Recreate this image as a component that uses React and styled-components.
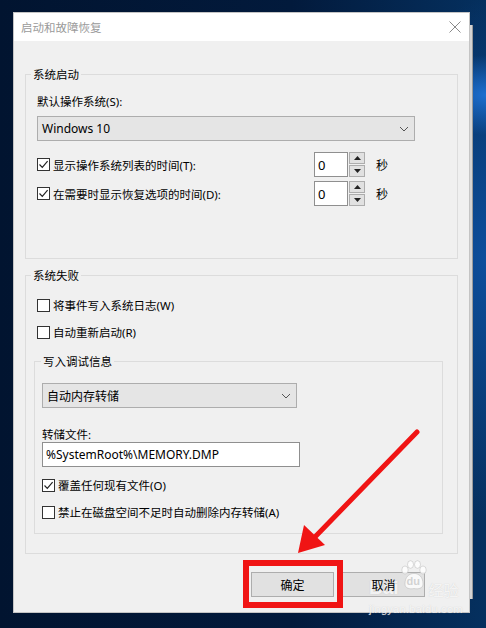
import React from 'react';
import styled, { createGlobalStyle } from 'styled-components';

const GlobalStyle = createGlobalStyle`
  html, body {
    margin: 0;
    padding: 0;
  }
  body {
    width: 486px;
    height: 628px;
    overflow: hidden;
    font-family: "Noto Sans", "Noto Sans CJK SC", sans-serif;
    font-size: 11.5px;
  }
`;

function Check({ checked }) {
  return (
    <CheckBox>
      {checked && (
        <svg width="11" height="11" viewBox="0 0 11 11">
          <path d="M1.5 5.5 L4.3 8.3 L9.6 2.2" fill="none" stroke="#222" strokeWidth="1.2" />
        </svg>
      )}
    </CheckBox>
  );
}

function CheckRow({ checked, label, indent }) {
  return (
    <CheckLine $indent={indent}>
      <Check checked={checked} />
      <span>{label}</span>
    </CheckLine>
  );
}

function Combo({ value, width }) {
  return (
    <ComboBox $width={width}>
      <span>{value}</span>
      <svg width="10" height="6" viewBox="0 0 10 6">
        <path d="M1 1 L5 5 L9 1" fill="none" stroke="#555" strokeWidth="1" />
      </svg>
    </ComboBox>
  );
}

function Spinner({ value }) {
  return (
    <SpinWrap>
      <SpinInput>{value}</SpinInput>
      <SpinButtons>
        <SpinBtn>
          <svg width="7" height="4" viewBox="0 0 7 4"><path d="M0 4 L3.5 0 L7 4 Z" fill="#222" /></svg>
        </SpinBtn>
        <SpinBtn>
          <svg width="7" height="4" viewBox="0 0 7 4"><path d="M0 0 L7 0 L3.5 4 Z" fill="#222" /></svg>
        </SpinBtn>
      </SpinButtons>
    </SpinWrap>
  );
}

function TimeRow({ label }) {
  return (
    <TimeLine>
      <TimeLabel>
        <Check checked />
        <span>{label}</span>
      </TimeLabel>
      <Spinner value="0" />
      <Unit>秒</Unit>
    </TimeLine>
  );
}

function Paw() {
  return (
    <svg width="28" height="30" viewBox="0 0 28 30">
      <g fill="rgba(255,255,255,0.8)" stroke="rgba(170,170,170,0.5)" strokeWidth="0.8">
        <ellipse cx="5" cy="10" rx="3.2" ry="4" />
        <ellipse cx="10.5" cy="4.5" rx="3" ry="3.8" />
        <ellipse cx="17.5" cy="4.5" rx="3" ry="3.8" />
        <ellipse cx="23" cy="10" rx="3.2" ry="4" />
        <path d="M5 24 C5 17 9 13.5 14 13.5 C19 13.5 23 17 23 24 C23 28 19 29.5 14 28.5 C9 29.5 5 28 5 24 Z" />
      </g>
    </svg>
  );
}

export default function App() {
  return (
    <>
      <GlobalStyle />
      <Desktop>
        <BehindWindow />
        <Window>
          <TitleBar>
            <Title>启动和故障恢复</Title>
            <CloseIcon viewBox="0 0 12 12">
              <path d="M0.5 0.5 L11.5 11.5 M11.5 0.5 L0.5 11.5" stroke="#8a8a8a" strokeWidth="1" />
            </CloseIcon>
          </TitleBar>
          <Body>
            <Group $top={25} $pad="12px 11px 52px 11px">
              <Legend $shift={-6}>系统启动</Legend>
              <FieldLabel>默认操作系统(S):</FieldLabel>
              <Combo value="Windows 10" width={378} />
              <TimeRows>
                <TimeRow label="显示操作系统列表的时间(T):" />
                <TimeRow label="在需要时显示恢复选项的时间(D):" />
              </TimeRows>
            </Group>

            <Group $top={8} $pad="14px 14px 19px 8px">
              <Legend $shift={-3}>系统失败</Legend>
              <CheckRow label="将事件写入系统日志(W)" indent={3} />
              <Gap $h={11} />
              <CheckRow label="自动重新启动(R)" indent={3} />
              <InnerGroup>
                <Legend $shift={-1}>写入调试信息</Legend>
                <Combo value="自动内存转储" width={255} />
                <FileLabel>转储文件:</FileLabel>
                <TextInput>%SystemRoot%\MEMORY.DMP</TextInput>
                <Gap $h={10} />
                <CheckRow checked label="覆盖任何现有文件(O)" />
                <Gap $h={11} />
                <CheckRow label="禁止在磁盘空间不足时自动删除内存转储(A)" />
              </InnerGroup>
            </Group>

            <ButtonBar>
              <Button><ButtonText>确定</ButtonText></Button>
              <Button><ButtonText>取消</ButtonText></Button>
            </ButtonBar>
          </Body>
        </Window>

        <Highlight />
        <Arrow width="486" height="628" viewBox="0 0 486 628">
          <line x1="417" y1="432" x2="313" y2="539" stroke="#f01414" strokeWidth="5" strokeLinecap="round" />
          <path d="M298 553 L304 525 L325 545 Z" fill="#f01414" />
        </Arrow>
        <Watermark>
          <BrandLine>
            <Bai>Bai</Bai>
            <PawBox>
              <Paw />
              <Du>du</Du>
            </PawBox>
            <Jy>经验</Jy>
          </BrandLine>
          <Site>jingyan.baidu.com</Site>
        </Watermark>
      </Desktop>
    </>
  );
}

const Desktop = styled.div`
  position: relative;
  width: 486px;
  height: 628px;
  padding: 12px 0 0 13px;
  box-sizing: border-box;
  background:
    radial-gradient(ellipse 60px 40px at 486px 95px, #1d6fd0 0%, rgba(29, 111, 208, 0) 100%),
    radial-gradient(ellipse 120px 260px at 486px 260px, #0d4e9c 0%, rgba(13, 78, 156, 0) 100%),
    linear-gradient(90deg, #011430 0%, #021a3c 60%, #05305f 100%);
`;

const BehindWindow = styled.div`
  position: absolute;
  left: 400px;
  top: 25px;
  width: 72px;
  height: 574px;
  background: #d4d4d4;
  border-right: 1px solid #9a9a9a;
`;

const Window = styled.div`
  position: relative;
  width: 457px;
  height: 601px;
  box-sizing: border-box;
  background: #f0f0f0;
  border: 1px solid #c4c4c4;
  display: flex;
  flex-direction: column;
`;

const TitleBar = styled.div`
  height: 28px;
  background: #fff;
  display: flex;
  align-items: center;
  justify-content: space-between;
  padding: 0 8px 0 7px;
`;

const Title = styled.div`
  color: #9a9a9a;
  font-size: 11.5px;
  font-family: "Noto Sans CJK SC", sans-serif;
`;

const CloseIcon = styled.svg`
  width: 12px;
  height: 12px;
`;

const Body = styled.div`
  flex: 1;
  padding: 0 11px;
  display: flex;
  flex-direction: column;
  color: #000;
`;

const Group = styled.fieldset`
  margin: ${p => p.$top}px 0 0 0;
  padding: ${p => p.$pad};
  border: 1px solid #dcdcdc;
  min-width: 0;
`;

const InnerGroup = styled.fieldset`
  margin: 13px 0 0 0;
  padding: 14px 8px 13px 7px;
  border: 1px solid #dcdcdc;
  min-width: 0;
`;

const Legend = styled.legend`
  padding: 0 2px;
  margin-left: ${p => p.$shift}px;
  font-size: 11.5px;
  line-height: 16px;
  font-family: "Noto Sans CJK SC", sans-serif;
  color: #000;
`;

const FieldLabel = styled.div`
  line-height: 16px;
  margin-bottom: 6px;
`;

const FileLabel = styled.div`
  line-height: 14px;
  margin-top: 20px;
`;

const ComboBox = styled.div`
  width: ${p => p.$width}px;
  height: 25px;
  box-sizing: border-box;
  background: #e5e5e5;
  border: 1px solid #adadad;
  display: flex;
  align-items: center;
  justify-content: space-between;
  padding: 0 5px 0 4px;
  font-size: 12px;
`;

const TextInput = styled.div`
  width: 258px;
  height: 25px;
  box-sizing: border-box;
  background: #fff;
  border: 1px solid #8f8f8f;
  display: flex;
  align-items: center;
  padding-left: 3px;
  font-size: 12px;
`;

const TimeRows = styled.div`
  margin-top: 11px;
  display: flex;
  flex-direction: column;
  gap: 4px;
`;

const TimeLine = styled.div`
  display: flex;
  align-items: center;
  height: 25px;
`;

const TimeLabel = styled.div`
  width: 277px;
  display: flex;
  align-items: center;
  gap: 3px;
`;

const Unit = styled.span`
  margin-left: 11px;
  font-size: 12px;
  font-family: "Noto Sans CJK SC", sans-serif;
`;

const SpinWrap = styled.div`
  display: flex;
  gap: 1px;
`;

const SpinInput = styled.div`
  width: 34px;
  height: 25px;
  box-sizing: border-box;
  background: #fff;
  border: 1px solid #8f8f8f;
  padding-left: 3px;
  display: flex;
  align-items: center;
  font-size: 13px;
`;

const SpinButtons = styled.div`
  display: flex;
  flex-direction: column;
  gap: 1px;
`;

const SpinBtn = styled.div`
  width: 16px;
  height: 12px;
  box-sizing: border-box;
  background: #e1e1e1;
  border: 1px solid #adadad;
  display: flex;
  align-items: center;
  justify-content: center;
`;

const CheckLine = styled.div`
  display: flex;
  align-items: center;
  gap: 3px;
  height: 16px;
  margin-left: ${p => p.$indent || 0}px;
`;

const CheckBox = styled.span`
  width: 13px;
  height: 13px;
  box-sizing: border-box;
  border: 1px solid #333;
  background: #fff;
  display: flex;
  align-items: center;
  justify-content: center;
  flex-shrink: 0;
`;

const Gap = styled.div`
  height: ${p => p.$h}px;
`;

const ButtonBar = styled.div`
  display: flex;
  justify-content: flex-end;
  gap: 8px;
  margin-top: 18px;
  padding-right: 33px;
`;

const Button = styled.div`
  width: 83px;
  height: 25px;
  box-sizing: border-box;
  background: #e1e1e1;
  border: 1px solid #adadad;
  display: flex;
  align-items: center;
  justify-content: center;
`;

const ButtonText = styled.span`
  position: relative;
  z-index: 3;
  font-family: "Noto Sans CJK SC", sans-serif;
  font-size: 12px;
  color: #000;
`;

const Highlight = styled.div`
  position: absolute;
  left: 243px;
  top: 560px;
  width: 100px;
  height: 48px;
  box-sizing: border-box;
  border: 6px solid #f01414;
`;

const Arrow = styled.svg`
  position: absolute;
  left: 0;
  top: 0;
  pointer-events: none;
`;

const Watermark = styled.div`
  position: absolute;
  z-index: 1;
  left: 369px;
  top: 560px;
  width: 95px;
  display: flex;
  flex-direction: column;
  color: rgba(255, 255, 255, 0.8);
  text-shadow: 0 0 1px rgba(170, 170, 170, 0.55);
  pointer-events: none;
`;

const BrandLine = styled.div`
  display: flex;
  align-items: flex-end;
  height: 40px;
`;

const Bai = styled.span`
  font-family: "Liberation Sans", sans-serif;
  font-weight: bold;
  font-size: 19px;
  line-height: 20px;
  margin-bottom: 2px;
`;

const PawBox = styled.span`
  position: relative;
  display: flex;
  align-self: flex-start;
  margin-left: 1px;
`;

const Du = styled.span`
  position: absolute;
  left: 7px;
  top: 15px;
  font-family: "Liberation Sans", sans-serif;
  font-weight: bold;
  font-size: 11px;
  line-height: 12px;
  color: rgba(200, 200, 200, 0.8);
  text-shadow: none;
`;

const Jy = styled.span`
  font-family: "Noto Sans CJK SC", sans-serif;
  font-size: 15px;
  line-height: 18px;
  margin: 0 0 1px 1px;
`;

const Site = styled.span`
  font-family: "Liberation Sans", sans-serif;
  font-size: 11px;
  line-height: 14px;
  margin-top: 2px;
  letter-spacing: 0.3px;
`;
